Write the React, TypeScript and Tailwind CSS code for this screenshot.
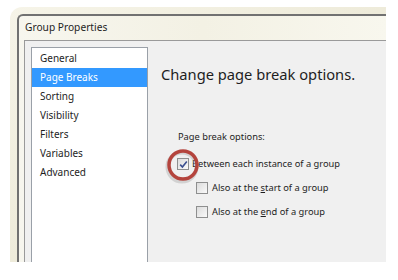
import React from "react";

const font = { fontFamily: '"Noto Sans", "Open Sans", sans-serif' };

function Box({ checked }: { checked?: boolean }) {
  return (
    <div className="w-[12px] h-[12px] border border-[#8e8f8f] bg-gradient-to-br from-[#dcdcdc] to-[#fafafa] flex items-center justify-center shrink-0">
      {checked && (
        <svg width="9" height="9" viewBox="0 0 9 9">
          <path d="M1.2 4.6 L3.4 7 L7.8 1.4" fill="none" stroke="#3b4f8f" strokeWidth="1.6" />
        </svg>
      )}
    </div>
  );
}

export default function App() {
  const items = ["General", "Page Breaks", "Sorting", "Visibility", "Filters", "Variables", "Advanced"];
  return (
    <div className="w-[398px] h-[280px] bg-white relative overflow-hidden" style={font}>
      <div className="ml-[10px] mt-[7px] w-[376px] h-[255px] rounded-tl-[12px] bg-gradient-to-br from-[#f6f4e8] to-[#e6e2cc] pl-[7px] pt-[7px]">
        <div className="h-full border-l-2 border-t-2 border-[#717171] rounded-tl-[6px] bg-gradient-to-r from-[#f7f6ee] via-[#f3f1e4] to-[#f8f7ee] flex flex-col">
          <div className="h-[24px] flex items-center pl-[6px] text-[10.2px] text-[#1e1e1e] shrink-0">
            Group Properties
          </div>
          <div className="flex-1 ml-[5px] border-l border-t border-[#9a9a9a] bg-[#f0f0f0] flex min-h-0">
            <div className="ml-[6px] mt-[6px] w-[117px] bg-white border border-b-0 border-[#9aa0a8] pt-[1px] text-[10px] text-[#1e1e1e]">
              {items.map((it) => (
                <div
                  key={it}
                  className={
                    "h-[19px] flex items-center pl-[8px] " +
                    (it === "Page Breaks" ? "bg-[#3399ff] text-white" : "")
                  }
                >
                  {it}
                </div>
              ))}
            </div>
            <div className="pl-[13px] pt-[23px] text-[#1e1e1e]">
              <div className="text-[14.7px] leading-[20px]">Change page break options.</div>
              <div className="mt-[45px] ml-[17px] text-[9.3px]">
                <div className="leading-[16px]">Page break options:</div>
                <div className="mt-[11px] flex items-center h-[16px] -ml-[1px] gap-[3px]">
                  <Box checked />
                  <span>Between each instance of a group</span>
                </div>
                <div className="mt-[8px] flex items-center h-[16px] ml-[18px] gap-[4px]">
                  <Box />
                  <span>
                    Also at the <span className="underline">s</span>tart of a group
                  </span>
                </div>
                <div className="mt-[8px] flex items-center h-[16px] ml-[18px] gap-[4px]">
                  <Box />
                  <span>
                    Also at the <span className="underline">e</span>nd of a group
                  </span>
                </div>
              </div>
            </div>
          </div>
        </div>
      </div>
      <svg className="absolute left-[161px] top-[143px]" width="46" height="46" viewBox="0 0 46 46">
        <circle cx="21" cy="24" r="14.5" fill="none" stroke="#9a9a9a" strokeOpacity="0.35" strokeWidth="4" />
        <circle cx="22" cy="22" r="14" fill="none" stroke="#b4443d" strokeWidth="3.5" />
      </svg>
    </div>
  );
}
